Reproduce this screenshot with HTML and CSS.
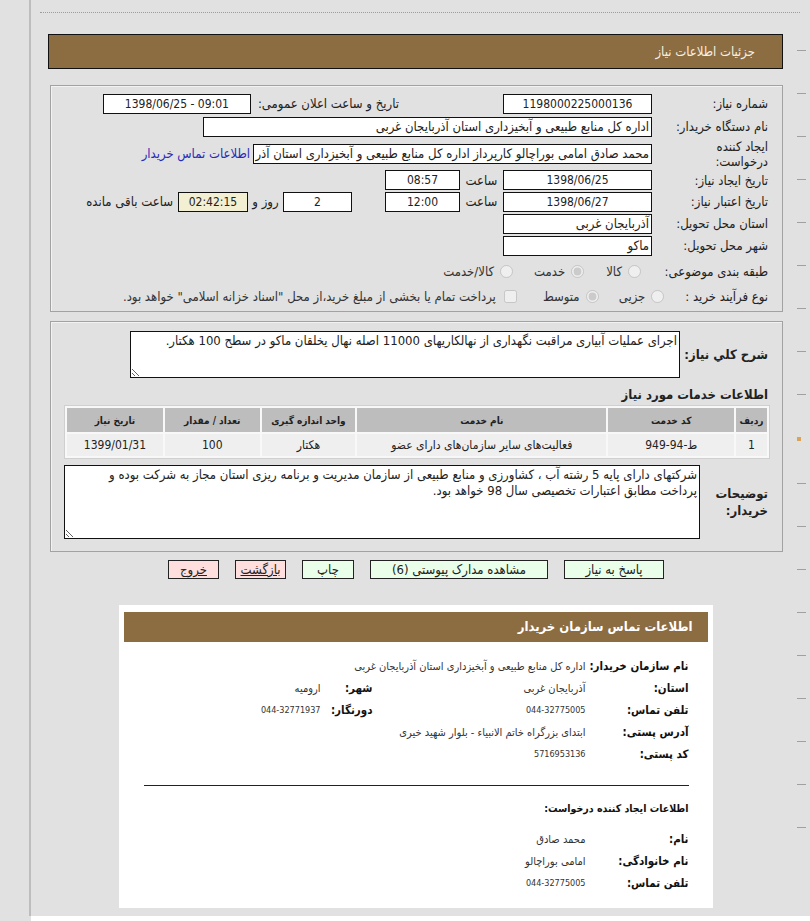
FILE: index.html
```html
<!DOCTYPE html>
<html lang="fa">
<head>
<meta charset="utf-8">
<title>جزئیات اطلاعات نیاز</title>
<link rel="stylesheet" href="styles.css">
</head>
<body>
<div class="frame">
  <div class="dots"></div>
  <div class="content">
    <div class="main" dir="rtl">
      <div class="title-bar">جزئیات اطلاعات نیاز</div>

      <div class="panel p1">
        <div class="row r1">
          <div class="lbl">شماره نیاز:</div>
          <div class="box w149 c num">1198000225000136</div>
          <div class="lbl2">تاریخ و ساعت اعلان عمومی:</div>
          <div class="box w148 c num ltr">1398/06/25 - 09:01</div>
        </div>
        <div class="row r2">
          <div class="lbl">نام دستگاه خریدار:</div>
          <div class="box w449">اداره کل منابع طبیعی و آبخیزداری استان آذربایجان غربی</div>
        </div>
        <div class="row r3">
          <div class="lbl lbl3">ایجاد کننده درخواست:</div>
          <div class="box w399">محمد صادق امامی بوراچالو کارپرداز اداره کل منابع طبیعی و آبخیزداری استان آذر</div>
          <a class="link" href="#">اطلاعات تماس خریدار</a>
        </div>
        <div class="row r4">
          <div class="lbl">تاریخ ایجاد نیاز:</div>
          <div class="box w149 c num">1398/06/25</div>
          <div class="sa">ساعت</div>
          <div class="box w75 c num">08:57</div>
        </div>
        <div class="row r5">
          <div class="lbl">تاریخ اعتبار نیاز:</div>
          <div class="box w149 c num">1398/06/27</div>
          <div class="sa">ساعت</div>
          <div class="box w75 c num">12:00</div>
          <div class="box w69 c num days">2</div>
          <div class="roz">روز و</div>
          <div class="box w70 c num remain">02:42:15</div>
          <div class="rest">ساعت باقی مانده</div>
        </div>
        <div class="row r6">
          <div class="lbl">استان محل تحویل:</div>
          <div class="box w149">آذربایجان غربی</div>
        </div>
        <div class="row r7">
          <div class="lbl">شهر محل تحویل:</div>
          <div class="box w149">ماکو</div>
        </div>
        <div class="row r8">
          <div class="lbl">طبقه بندی موضوعی:</div>
          <label class="opt o1"><input type="radio" disabled>کالا</label>
          <label class="opt o2"><input type="radio" checked disabled>خدمت</label>
          <label class="opt o3"><input type="radio" disabled>کالا/خدمت</label>
        </div>
        <div class="row r9">
          <div class="lbl9">نوع فرآیند خرید :</div>
          <label class="opt"><input type="radio" disabled>جزیی</label>
          <label class="opt"><input type="radio" checked disabled>متوسط</label>
          <label class="opt chk"><input type="checkbox" disabled>پرداخت تمام یا بخشی از مبلغ خرید،از محل "اسناد خزانه اسلامی" خواهد بود.</label>
        </div>
      </div>

      <div class="panel p2">
        <div class="desc-row">
          <div class="blbl w88">شرح کلي نياز:</div>
          <textarea class="ta ta1" readonly>اجرای عملیات آبیاری مراقبت نگهداری از نهالکاریهای 11000 اصله نهال یخلقان ماکو در سطح 100 هکتار.</textarea>
        </div>
        <div class="sub-h">اطلاعات خدمات مورد نیاز</div>
        <table class="grid">
          <thead>
            <tr>
              <th class="c1">ردیف</th>
              <th class="c2">کد خدمت</th>
              <th class="c3">نام خدمت</th>
              <th class="c4">واحد اندازه گیری</th>
              <th class="c5">تعداد / مقدار</th>
              <th class="c6">تاریخ نیاز</th>
            </tr>
          </thead>
          <tbody>
            <tr>
              <td>1</td>
              <td>ط-94-949</td>
              <td>فعالیت‌های سایر سازمان‌های دارای عضو</td>
              <td>هکتار</td>
              <td>100</td>
              <td>1399/01/31</td>
            </tr>
          </tbody>
        </table>
        <div class="note-row">
          <div class="blbl w68">توضیحات خریدار:</div>
          <textarea class="ta ta2" readonly>شرکتهای دارای پایه 5 رشته آب ، کشاورزی و منابع طبیعی از سازمان مدیریت و برنامه ریزی استان مجاز به شرکت بوده و
پرداخت مطابق اعتبارات تخصیصی سال 98 خواهد بود.</textarea>
        </div>
      </div>

      <div class="buttons">
        <button class="btn green b100">پاسخ به نیاز</button>
        <button class="btn green b178">مشاهده مدارک پیوستی (6)</button>
        <button class="btn green b52">چاپ</button>
        <button class="btn pink b51">بازگشت</button>
        <button class="btn pink b51">خروج</button>
      </div>

      <div class="card">
        <div class="card-head">اطلاعات تماس سازمان خریدار</div>
        <div class="info">
          <div class="k">نام سازمان خریدار:</div>
          <div class="v span3">اداره کل منابع طبیعی و آبخیزداری استان آذربایجان غربی</div>
          <div class="k">استان:</div>
          <div class="v">آذربایجان غربی</div>
          <div class="k">شهر:</div>
          <div class="v">ارومیه</div>
          <div class="k">تلفن تماس:</div>
          <div class="v n">044-32775005</div>
          <div class="k">دورنگار:</div>
          <div class="v n">044-32771937</div>
          <div class="k">آدرس پستی:</div>
          <div class="v span3">ابتدای بزرگراه خاتم الانبیاء - بلوار شهید خیری</div>
          <div class="k">کد پستی:</div>
          <div class="v n span3">5716953136</div>
        </div>
        <div class="sep"></div>
        <div class="card-sub">اطلاعات ایجاد کننده درخواست:</div>
        <div class="info info2">
          <div class="k">نام:</div>
          <div class="v span3">محمد صادق</div>
          <div class="k">نام خانوادگی:</div>
          <div class="v span3">امامی بوراچالو</div>
          <div class="k">تلفن تماس:</div>
          <div class="v n span3">044-32775005</div>
        </div>
      </div>
    </div>
    <div class="rail">
      <span class="tick"></span><span class="tick"></span><span class="tick"></span><span class="tick"></span><span class="tick"></span><span class="tick"></span><span class="tick"></span><span class="tick"></span><span class="tick"></span><span class="tick orange"></span><span class="tick"></span><span class="tick"></span><span class="tick"></span><span class="tick"></span><span class="tick"></span><span class="tick"></span><span class="tick"></span><span class="tick"></span><span class="tick"></span>
    </div>
  </div>
</div>
<div class="foot"></div>
</body>
</html>
```

FILE: styles.css
```css
html, body {
  margin: 0;
  padding: 0;
  background: #e1e1e1;
}
body {
  font-family: Tahoma, "DejaVu Sans Condensed", "DejaVu Sans", sans-serif;
  font-size: 13px;
  color: #222;
}
.frame {
  margin-left: 29px;
  border-left: 2px solid #bdbdbd;
  height: 904px;
  padding-top: 12px;
}
.foot {
  margin-left: 31px;
  height: 5px;
  background: #fff;
}
.dots {
  margin-left: 9px;
  width: 760px;
  border-top: 1px dotted #9c9c9c;
}
.content {
  display: flex;
}
.main {
  margin-left: 17px;
  margin-top: 21px;
  width: 735px;
}
.rail {
  margin-left: 14px;
  margin-top: 37px;
  display: flex;
  flex-direction: column;
  align-items: flex-start;
  gap: 42px;
}
.tick {
  display: block;
  width: 9px;
  height: 1px;
  border-top: 1px solid #a0a0a0;
  box-sizing: border-box;
}
.tick.orange {
  width: 4px;
  height: 4px;
  border: 0;
  background: #d9a35a;
}
.title-bar {
  height: 33px;
  line-height: 33px;
  background: #8c6c41;
  border: 1px solid #111;
  color: #f6efe2;
  font-size: 13px;
  padding-right: 27px;
}
.panel {
  margin-left: 2px;
  border: 1px solid #a2a2a2;
  box-shadow: inset 1px 1px 0 #f2f2f2;
}
.p1 {
  margin-top: 16px;
  padding: 6px 14px 5px 0;
}
.row {
  display: flex;
  align-items: center;
  white-space: nowrap;
}
.r1 { height: 23px; }
.r2 { height: 23px; }
.r3 { height: 31px; }
.r4 { height: 22px; }
.r5 { height: 21px; }
.r6 { height: 23px; }
.r7 { height: 21px; }
.r8 { height: 30px; }
.r9 { height: 20px; }
.lbl {
  width: 116px;
  flex: none;
  line-height: 15px;
  white-space: normal;
}
.lbl.lbl3 { width: 60px; margin-left: 56px; }
.lbl9 {
  flex: none;
  margin-left: 21px;
}
.lbl2 {
  margin-right: 104px;
  margin-left: 7px;
}
.box {
  flex: none;
  box-sizing: border-box;
  height: 20px;
  line-height: 18px;
  border: 1px solid #111;
  background: #fff;
  padding: 0 2px;
  overflow: hidden;
  white-space: nowrap;
}
.box.c { text-align: center; }
.num { font-size: 12px; }
.ltr { direction: ltr; }
.w149 { width: 149px; }
.w148 { width: 148px; }
.w449 { width: 449px; }
.w399 { width: 399px; }
.w75 { width: 75px; }
.w69 { width: 69px; }
.w70 { width: 70px; }
.sa {
  width: 43px;
  text-align: center;
  flex: none;
}
.days { margin-right: 33px; }
.roz {
  width: 35px;
  text-align: center;
  flex: none;
}
.remain { background: #f2efd3; }
.rest { margin-right: 5px; }
.link {
  color: #2a2ab8;
  text-decoration: none;
  margin-right: 3px;
}
.opt {
  display: flex;
  align-items: center;
  color: #333;
}
.opt input {
  margin: 0 0 0 6px;
  width: 13px;
  height: 13px;
}
.r8 .o1 { margin-right: 11px; }
.r8 .o2 { margin-right: 22px; }
.r8 .o3 { margin-right: 21px; }
.r9 .opt + .opt { margin-right: 20px; }
.r9 .opt.chk { margin-right: 26px; }
.chk input { margin-left: 8px; }

.p2 {
  margin-top: 9px;
  padding: 9px 14px 12px 12px;
}
.desc-row, .note-row {
  display: flex;
  align-items: center;
}
.blbl {
  flex: none;
  font-weight: bold;
  font-size: 13px;
  line-height: 17px;
}
.w88 { width: 88px; }
.w68 { width: 68px; }
.ta {
  box-sizing: border-box;
  border: 1px solid #111;
  background: #fff;
  font-family: inherit;
  font-size: 13px;
  color: #222;
  padding: 1px 2px;
  margin: 0;
  line-height: 16px;
  white-space: pre-wrap;
}
.ta1 { width: 550px; height: 47px; }
.ta2 { width: 636px; height: 74px; }
.sub-h {
  font-weight: bold;
  font-size: 13px;
  margin-top: 6px;
  height: 21px;
  line-height: 21px;
}
.grid {
  width: 706px;
  margin-right: -2px;
  border: 1px solid #cfcfcf;
  border-spacing: 2px;
  background: #f8f8f8;
  margin-bottom: 6px;
  font-size: 12px;
}
.grid th {
  background: #bdbdbd;
  font-size: 10px;
  font-weight: bold;
  height: 24px;
  padding: 0;
  color: #222;
}
.grid td {
  background: #efefef;
  height: 22px;
  padding: 0;
  text-align: center;
}
.c1 { width: 31px; }
.c2 { width: 126px; }
.c3 { width: 250px; }
.c4 { width: 94px; }
.c5 { width: 95px; }
.c6 { width: 96px; }

.buttons {
  display: flex;
  justify-content: center;
  gap: 16px;
  margin-top: 8px;
  padding-left: 1px;
}
.btn {
  box-sizing: border-box;
  height: 19px;
  border: 1px solid #222;
  font-family: inherit;
  font-size: 13px;
  color: #222;
  padding: 0;
  line-height: 17px;
}
.green { background: #eaffea; }
.pink { background: #ffdede; text-decoration: underline; }
.b100 { width: 100px; }
.b178 { width: 178px; }
.b52 { width: 52px; }
.b51 { width: 51px; }

.card {
  width: 594px;
  box-sizing: border-box;
  margin: 26px auto 0;
  background: #fff;
  padding: 7px 5px 14px;
}
.card-head {
  height: 30px;
  line-height: 30px;
  background: #8c6c41;
  color: #fff;
  font-weight: bold;
  font-size: 13px;
  padding-right: 15px;
}
.info {
  display: grid;
  grid-template-columns: 103px 213px 52px auto;
  grid-auto-rows: 22px;
  align-items: center;
  padding: 13px 19px 0 0;
}
.info2 { padding-top: 14px; }
.k {
  font-weight: bold;
  font-size: 11.5px;
  color: #111;
  white-space: nowrap;
}
.v {
  font-size: 11px;
  color: #333;
  white-space: nowrap;
}
.v.n { font-size: 9px; }
.span3 { grid-column: span 3; }
.sep {
  margin: 20px 19px 0 20px;
  border-top: 1px solid #222;
}
.card-sub {
  font-weight: bold;
  font-size: 10.5px;
  color: #111;
  padding-right: 19px;
  margin-top: 16px;
}
```
